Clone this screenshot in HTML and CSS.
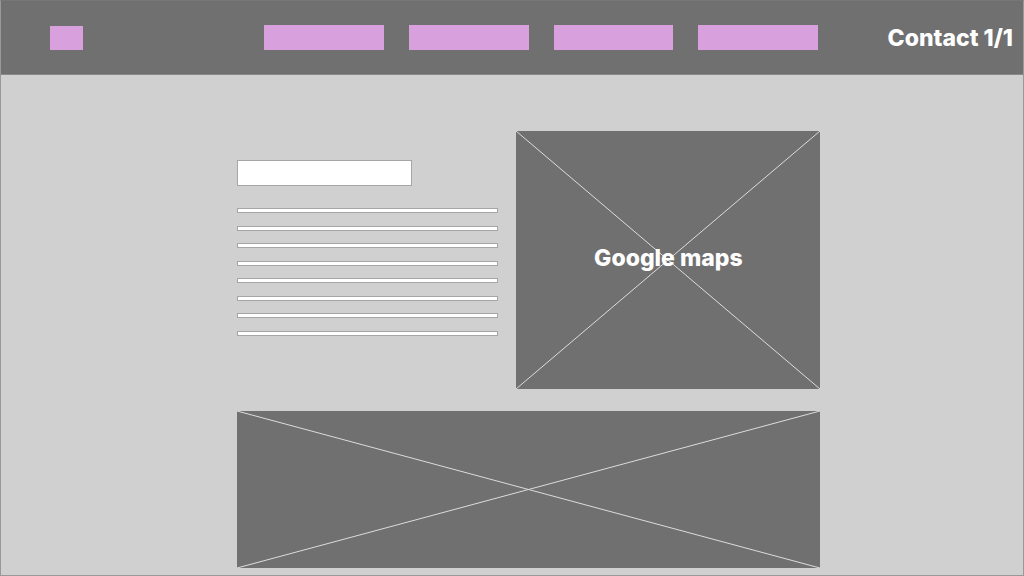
FILE: index.html
```html
<!DOCTYPE html>
<html lang="en">
<head>
<meta charset="utf-8">
<meta name="viewport" content="width=device-width, initial-scale=1">
<title>Contact 1/1</title>
<link rel="stylesheet" href="styles.css">
</head>
<body>
<div class="page">
  <header class="header">
    <a class="logo" href="#" aria-label="Home"></a>
    <nav class="nav" aria-label="Main">
      <a class="nav-item" href="#" aria-label="Menu item 1"></a>
      <a class="nav-item" href="#" aria-label="Menu item 2"></a>
      <a class="nav-item" href="#" aria-label="Menu item 3"></a>
      <a class="nav-item" href="#" aria-label="Menu item 4"></a>
    </nav>
    <h1 class="title">Contact 1/1</h1>
  </header>
  <main class="main">
    <div class="content">
      <section class="info">
        <div class="heading"></div>
        <div class="lines">
          <div class="line"></div>
          <div class="line"></div>
          <div class="line"></div>
          <div class="line"></div>
          <div class="line"></div>
          <div class="line"></div>
          <div class="line"></div>
          <div class="line"></div>
        </div>
      </section>
      <section class="placeholder map">
        <svg class="cross" viewBox="0 0 100 100" preserveAspectRatio="none" aria-hidden="true">
          <path d="M0 0 100 100M100 0 0 100"/>
        </svg>
        <h2 class="label">Google maps</h2>
      </section>
      <section class="placeholder banner">
        <svg class="cross" viewBox="0 0 100 100" preserveAspectRatio="none" aria-hidden="true">
          <path d="M0 0 100 100M100 0 0 100"/>
        </svg>
      </section>
    </div>
  </main>
</div>
</body>
</html>
```
FILE: styles.css
```css
* {
  box-sizing: border-box;
}

body {
  margin: 0;
  font-family: "Inter", "Liberation Sans", sans-serif;
  color: #fff;
}

.page {
  min-height: 100vh;
  background: #d0d0d0;
  border: 1px solid #999;
  border-top-color: #777;
}

.header {
  display: flex;
  align-items: center;
  padding: 24px 10px 24px 49px;
  background: #707070;
  border-bottom: 1px solid #888;
}

.logo {
  flex: none;
  width: 33px;
  height: 24px;
  background: #d8a1de;
}

.nav {
  display: grid;
  grid-template-columns: repeat(4, 1fr);
  gap: 25px;
  flex: 0 1 554px;
  margin-left: 181px;
}

.nav-item {
  height: 25px;
  background: #d8a1de;
}

.title,
.label {
  margin: 0;
  font-size: 23px;
  line-height: 23px;
  font-weight: 800;
  white-space: nowrap;
}

.title {
  margin-left: auto;
  padding-top: 2px;
}

.main {
  display: grid;
  grid-template-columns: 7fr minmax(0, 583px) 6fr;
  padding: 56px 0 7px;
}

.content {
  grid-column: 2;
  display: grid;
  grid-template-columns: 261fr 304fr;
  gap: 22px 18px;
}

.info {
  padding-top: 29px;
}

.heading {
  width: 67%;
  height: 26px;
  background: #fff;
  border: 1px solid #a6a6a6;
}

.lines {
  display: flex;
  flex-direction: column;
  justify-content: space-between;
  height: 128px;
  margin-top: 22px;
}

.line {
  height: 5px;
  background: #fff;
  border: 1px solid #a6a6a6;
}

.placeholder {
  display: grid;
  place-items: center;
  background: #707070;
}

.map {
  height: 258px;
}

.banner {
  grid-column: 1 / -1;
  height: 157px;
}

.cross {
  grid-area: 1 / 1;
  width: 100%;
  height: 100%;
  min-height: 0;
}

.cross path {
  fill: none;
  stroke: #dcdcdc;
  stroke-width: 1px;
  vector-effect: non-scaling-stroke;
}

.label {
  grid-area: 1 / 1;
  padding-bottom: 4px;
}
```
